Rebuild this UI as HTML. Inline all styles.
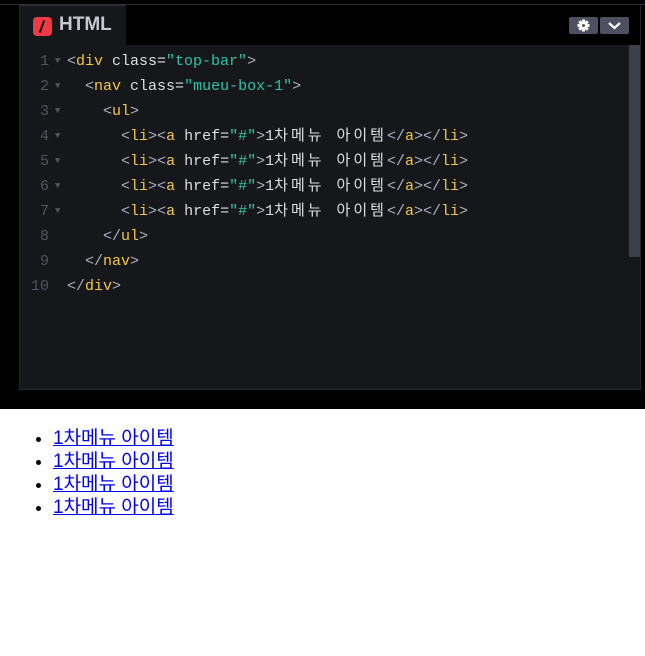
<!DOCTYPE html>
<html><head><meta charset="utf-8"><style>
*{margin:0;padding:0;box-sizing:border-box}
body{width:645px;height:656px;background:#fff;overflow:hidden;font-family:"Liberation Sans","Noto Sans CJK KR",sans-serif;position:relative}
.top{position:absolute;left:0;top:0;width:645px;height:409px;background:#000}
.topline{position:absolute;left:0;top:4px;width:645px;height:1px;background:#2e3036}
.ed{position:absolute;left:19px;top:5px;width:622px;height:385px;border-left:1px solid #25272c;border-right:1px solid #25272c;border-bottom:1px solid #2a2c31}
.tab{position:absolute;left:0;top:0;width:106px;height:40px;background:#15171b;border-top:1px solid #2e3036}
.logo{position:absolute;left:13px;top:11px;width:19px;height:19px;background:#f23a46;border-radius:4px}
.logo:after{content:"";position:absolute;left:8px;top:3px;width:2px;height:13px;background:#111;transform:rotate(20deg)}
.tabt{position:absolute;left:39px;top:8px;color:#c6c9d0;font-weight:bold;font-size:19px}
.btn{position:absolute;top:12px;height:17px;background:#4c5060;border-radius:2px}
.code{position:absolute;left:0;top:40px;width:620px;height:344px;background:#15171b}
.sb{position:absolute;right:0;top:0;width:11px;height:212px;background:#3a3f4b}
.ln{position:absolute;left:0;width:620px;height:25px;font-family:"Liberation Mono","Noto Sans CJK KR",monospace;font-size:15px;line-height:25px;color:#dcdfe4;white-space:pre}
.n{position:absolute;left:0;width:29px;text-align:right;color:#50555f}
.ar{position:absolute;left:35px;top:0;color:#50555f;font-size:9px}
.c{position:absolute;left:47px}
.b{color:#abb2bf}.t{color:#f5c842}.s{color:#2ec4a8}.k{letter-spacing:3px}
ul{position:absolute;left:53px;top:427px;font-size:19px;line-height:23px}
li{list-style:disc}
a{color:#0000ee}
</style></head><body>
<div class="top"><div class="topline"></div>
<div class="ed">
<div class="tab"><div class="logo"></div><div class="tabt">HTML</div></div>
<div class="btn" style="left:549px;width:29px"><svg width="29" height="17"><g transform="translate(14.5,8.5)" fill="#fff"><circle r="4"/><rect x="-1.5" y="-6" width="3" height="12"/><rect x="-6" y="-1.5" width="12" height="3"/><rect x="-1.5" y="-6" width="3" height="12" transform="rotate(45)"/><rect x="-1.5" y="-6" width="3" height="12" transform="rotate(-45)"/></g><circle cx="14.5" cy="8.5" r="1.5" fill="#4c5060"/></svg></div>
<div class="btn" style="left:580px;width:29px"><svg width="29" height="17"><path d="M9 6l5.5 5 5.5-5" stroke="#fff" stroke-width="2.2" fill="none"/></svg></div>
<div class="code"><div class="sb"></div>
<div class="ln" style="top:4px"><span class="n">1</span><span class="ar">▼</span><span class="c"><span class="b">&lt;</span><span class="t">div</span> class=<span class="s">"top-bar"</span><span class="b">&gt;</span></span></div>
<div class="ln" style="top:29px"><span class="n">2</span><span class="ar">▼</span><span class="c">  <span class="b">&lt;</span><span class="t">nav</span> class=<span class="s">"mueu-box-1"</span><span class="b">&gt;</span></span></div>
<div class="ln" style="top:54px"><span class="n">3</span><span class="ar">▼</span><span class="c">    <span class="b">&lt;</span><span class="t">ul</span><span class="b">&gt;</span></span></div>
<div class="ln" style="top:79px"><span class="n">4</span><span class="ar">▼</span><span class="c">      <span class="b">&lt;</span><span class="t">li</span><span class="b">&gt;&lt;</span><span class="t">a</span> href=<span class="s">"#"</span><span class="b">&gt;</span>1<span class="k">차메뉴 아이템</span><span class="b">&lt;/</span><span class="t">a</span><span class="b">&gt;&lt;/</span><span class="t">li</span><span class="b">&gt;</span></span></div>
<div class="ln" style="top:104px"><span class="n">5</span><span class="ar">▼</span><span class="c">      <span class="b">&lt;</span><span class="t">li</span><span class="b">&gt;&lt;</span><span class="t">a</span> href=<span class="s">"#"</span><span class="b">&gt;</span>1<span class="k">차메뉴 아이템</span><span class="b">&lt;/</span><span class="t">a</span><span class="b">&gt;&lt;/</span><span class="t">li</span><span class="b">&gt;</span></span></div>
<div class="ln" style="top:129px"><span class="n">6</span><span class="ar">▼</span><span class="c">      <span class="b">&lt;</span><span class="t">li</span><span class="b">&gt;&lt;</span><span class="t">a</span> href=<span class="s">"#"</span><span class="b">&gt;</span>1<span class="k">차메뉴 아이템</span><span class="b">&lt;/</span><span class="t">a</span><span class="b">&gt;&lt;/</span><span class="t">li</span><span class="b">&gt;</span></span></div>
<div class="ln" style="top:154px"><span class="n">7</span><span class="ar">▼</span><span class="c">      <span class="b">&lt;</span><span class="t">li</span><span class="b">&gt;&lt;</span><span class="t">a</span> href=<span class="s">"#"</span><span class="b">&gt;</span>1<span class="k">차메뉴 아이템</span><span class="b">&lt;/</span><span class="t">a</span><span class="b">&gt;&lt;/</span><span class="t">li</span><span class="b">&gt;</span></span></div>
<div class="ln" style="top:179px"><span class="n">8</span><span class="c">    <span class="b">&lt;/</span><span class="t">ul</span><span class="b">&gt;</span></span></div>
<div class="ln" style="top:204px"><span class="n">9</span><span class="c">  <span class="b">&lt;/</span><span class="t">nav</span><span class="b">&gt;</span></span></div>
<div class="ln" style="top:229px"><span class="n">10</span><span class="c"><span class="b">&lt;/</span><span class="t">div</span><span class="b">&gt;</span></span></div>
</div></div></div>
<ul>
<li><a href="#">1차메뉴 아이템</a></li>
<li><a href="#">1차메뉴 아이템</a></li>
<li><a href="#">1차메뉴 아이템</a></li>
<li><a href="#">1차메뉴 아이템</a></li>
</ul>
</body></html>
